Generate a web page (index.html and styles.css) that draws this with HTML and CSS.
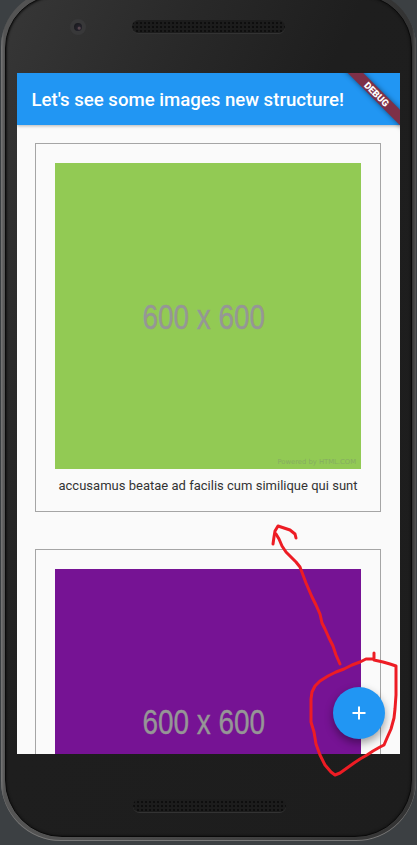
FILE: index.html
```html
<!DOCTYPE html>
<html lang="en">
<head>
<meta charset="utf-8">
<title>Images</title>
<link rel="stylesheet" href="styles.css">
</head>
<body>
<div class="phone">
  <div class="body">
    <header class="bezel-top"><span class="camera"></span><span class="speaker"></span></header>
    <main class="screen">
      <div class="appbar"><h1>Let's see some images new structure!</h1></div>
      <div class="debug"><span>DEBUG</span></div>
      <section class="list">
        <article class="card">
          <div class="picture green"><span class="size">600 x 600</span><span class="credit">Powered by HTML.COM</span></div>
          <p>accusamus beatae ad facilis cum similique qui sunt</p>
        </article>
        <article class="card">
          <div class="picture purple"><span class="size">600 x 600</span></div>
        </article>
      </section>
      <button class="fab" aria-label="Add"><svg width="26" height="26" viewBox="0 0 26 26"><path d="M13 6.5v13M6.5 13h13" stroke="#fff" stroke-width="2"/></svg></button>
    </main>
    <footer class="bezel-bottom"><span class="speaker"></span></footer>
  </div>
</div>
<svg class="marks" width="417" height="845" viewBox="0 0 417 845">
  <path d="M340 664L336 655 333 646 329 638 325 629 322 623 320 614 316 605 312 597 309 590 306 583 303 575 300 567 296 562 291 557 286 552 282 546 279 539 276 534"/>
  <path d="M273 544L274 537 275 531 278 526 284 528 290 530 295 534 296 538"/>
  <path d="M374 653L374 659 366 659 360 662 352 665 344 669 336 672 328 676 320 681 315 686 312 692 311 699 311 722 314 732 316 744 320 755 325 765 331 772 335 775 340 773 347 768 354 763 360 759 367 755 373 751 380 747 384 745 387 738 391 729 394 718 395 709 396 695 396 666 390 664 383 662 374 660"/>
</svg>
</body>
</html>
```
FILE: styles.css
```css
* { box-sizing: border-box; }
body {
  margin: 0;
  width: 417px;
  height: 845px;
  overflow: hidden;
  background: #3c4043;
  font-family: Roboto, "Liberation Sans", sans-serif;
}
.phone {
  display: flow-root;
  width: 415px;
  height: 851px;
  margin: -10px 0 0 1px;
  padding: 5px 4px 4px;
  border-radius: 57px 57px 60px 60px;
  background: linear-gradient(90deg, #777 0, #555 3px, #444 50%, #333 411px, #555 415px);
  box-shadow: inset 0 -1px 0 #777;
}
.body {
  height: 842px;
  padding: 0 12px;
  border: 1px solid #0a0a0a;
  border-radius: 53px 53px 57px 57px;
  background: linear-gradient(115deg, #373737 0, #292929 24%, #1e1e1e 45%, #1d1d1d 100%);
  box-shadow: inset 0 0 2px 1px #151515;
  width: 407px;
}
.bezel-top {
  display: flex;
  align-items: center;
  height: 77px;
  padding: 0 0 16px 52px;
}
.camera {
  width: 16px;
  height: 16px;
  border: 4px solid #383839;
  border-radius: 50%;
  background: radial-gradient(circle at 65% 65%, #58464e 0 1px, #24222b 2px, #1b1b20 5px);
}
.speaker {
  width: 153px;
  height: 13px;
  margin-left: 46px;
  border-radius: 7px;
  background: radial-gradient(circle, #0c0c0c 0 .6px, #1c1c1c 1.5px) 3px 1px / 4px 4px;
  box-shadow: 0 1px 0 #333;
}
.screen {
  position: relative;
  width: 383px;
  height: 681px;
  margin-left: -1px;
  overflow: hidden;
  background: #fafafa;
}
.appbar {
  position: relative;
  display: flex;
  align-items: center;
  height: 52px;
  padding: 1px 0 0 14.5px;
  background: #2196f3;
  box-shadow: 0 1px 3px rgba(0,0,0,.28);
}
h1 {
  margin: 0;
  color: #fff;
  font-size: 18.6px;
  font-weight: 500;
  white-space: nowrap;
}
.debug {
  position: absolute;
  top: 14.5px;
  right: -21px;
  width: 90px;
  height: 11px;
  transform: rotate(45deg);
  background: #7d3048;
  box-shadow: 0 0 5px rgba(0,0,0,.5);
  color: #fff;
  font-size: 9.5px;
  font-weight: 900;
  line-height: 11px;
  text-align: center;
  padding-left: 2px;
}
.list {
  display: flex;
  flex-direction: column;
  gap: 37px;
  padding: 18px;
}
.card {
  width: 346px;
  height: 368.5px;
  flex: none;
  padding: 19px;
  border: 1px solid #a5a5a5;
}
.picture {
  position: relative;
  display: flex;
  align-items: center;
  justify-content: center;
  height: 306px;
}
.green { background: #92ca54; }
.purple { background: #761394; }
.size {
  color: #969696;
  font: 34.5px "Liberation Sans", sans-serif;
  transform: translate(-4px, 1px) scaleX(.81);
  -webkit-text-stroke: .4px #969696;
  white-space: nowrap;
}
.credit {
  position: absolute;
  right: 5px;
  bottom: 3px;
  color: #86ac62;
  font: 6.8px "DejaVu Sans", sans-serif;
}
.card p {
  margin: 8px 0 0;
  color: #333;
  font-size: 13px;
  letter-spacing: .01px;
  line-height: 17px;
  text-align: center;
  white-space: nowrap;
}
.fab {
  position: absolute;
  right: 15.5px;
  bottom: 15px;
  display: grid;
  place-items: center;
  width: 52px;
  height: 52px;
  padding: 0;
  border: 0;
  border-radius: 50%;
  background: #2196f3;
  box-shadow: 0 4px 8px rgba(0,0,0,.38);
}
.bezel-bottom {
  padding: 45px 0 0 69px;
  display: flex;
}
.marks {
  position: absolute;
  top: 0;
  left: 0;
  fill: none;
  stroke: #ed1c24;
  stroke-width: 3;
  stroke-linecap: round;
  stroke-linejoin: round;
}
```
